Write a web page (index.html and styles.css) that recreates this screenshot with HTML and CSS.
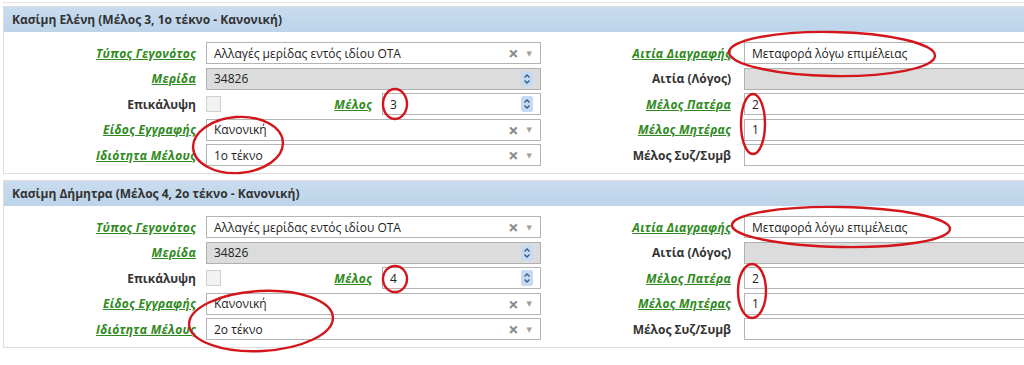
FILE: index.html
```html
<!DOCTYPE html>
<html>
<head>
<title>Μεταβολές μερίδας</title>
<link rel="stylesheet" href="styles.css">
</head>
<body>

<div class="prev-panel"></div>

<div class="panel">
    <div class="panel-title">Κασίμη Ελένη (Μέλος 3, 1ο τέκνο - Κανονική)</div>
    <div class="panel-body">
        <a class="label link">Τύπος Γεγονότος</a>
        <div class="field select"><span class="value">Αλλαγές μερίδας εντός ιδίου ΟΤΑ</span><span class="clear">×</span><span class="arrow">▼</span></div>
        <a class="label link right">Αιτία Διαγραφής</a>
        <div class="field"><span class="value">Μεταφορά λόγω επιμέλειας</span></div>

        <a class="label link">Μερίδα</a>
        <div class="field readonly"><span class="value">34826</span><span class="spin"></span></div>
        <span class="label right">Αιτία (Λόγος)</span>
        <div class="field readonly"></div>

        <span class="label">Επικάλυψη</span>
        <div class="split">
            <span class="check"></span>
            <a class="label link">Μέλος</a>
            <div class="field small"><span class="value">3</span><span class="spin"></span></div>
        </div>
        <a class="label link right">Μέλος Πατέρα</a>
        <div class="field"><span class="value">2</span></div>

        <a class="label link">Είδος Εγγραφής</a>
        <div class="field select"><span class="value">Κανονική</span><span class="clear">×</span><span class="arrow">▼</span></div>
        <a class="label link right">Μέλος Μητέρας</a>
        <div class="field"><span class="value">1</span></div>

        <a class="label link">Ιδιότητα Μέλους</a>
        <div class="field select"><span class="value">1ο τέκνο</span><span class="clear">×</span><span class="arrow">▼</span></div>
        <span class="label right">Μέλος Συζ/Συμβ</span>
        <div class="field"></div>
    </div>
</div>

<div class="panel">
    <div class="panel-title">Κασίμη Δήμητρα (Μέλος 4, 2ο τέκνο - Κανονική)</div>
    <div class="panel-body">
        <a class="label link">Τύπος Γεγονότος</a>
        <div class="field select"><span class="value">Αλλαγές μερίδας εντός ιδίου ΟΤΑ</span><span class="clear">×</span><span class="arrow">▼</span></div>
        <a class="label link right">Αιτία Διαγραφής</a>
        <div class="field"><span class="value">Μεταφορά λόγω επιμέλειας</span></div>

        <a class="label link">Μερίδα</a>
        <div class="field readonly"><span class="value">34826</span><span class="spin"></span></div>
        <span class="label right">Αιτία (Λόγος)</span>
        <div class="field readonly"></div>

        <span class="label">Επικάλυψη</span>
        <div class="split">
            <span class="check"></span>
            <a class="label link">Μέλος</a>
            <div class="field small"><span class="value">4</span><span class="spin"></span></div>
        </div>
        <a class="label link right">Μέλος Πατέρα</a>
        <div class="field"><span class="value">2</span></div>

        <a class="label link">Είδος Εγγραφής</a>
        <div class="field select"><span class="value">Κανονική</span><span class="clear">×</span><span class="arrow">▼</span></div>
        <a class="label link right">Μέλος Μητέρας</a>
        <div class="field"><span class="value">1</span></div>

        <a class="label link">Ιδιότητα Μέλους</a>
        <div class="field select"><span class="value">2ο τέκνο</span><span class="clear">×</span><span class="arrow">▼</span></div>
        <span class="label right">Μέλος Συζ/Συμβ</span>
        <div class="field"></div>
    </div>
</div>

<!-- hand-drawn marks on top of the screenshot -->
<svg class="marks" width="1024" height="365" viewBox="0 0 1024 365">
    <g fill="none" stroke="#d3161b" stroke-width="2.4">
        <ellipse cx="238" cy="145" rx="45" ry="28" transform="rotate(-4 238 145)"/>
        <ellipse cx="395" cy="104" rx="12" ry="15"/>
        <ellipse cx="832" cy="54" rx="103" ry="22" transform="rotate(1 832 54)"/>
        <ellipse cx="753" cy="124" rx="12" ry="30"/>

        <ellipse cx="261" cy="321" rx="72" ry="30" transform="rotate(-3 261 321)"/>
        <ellipse cx="395" cy="279" rx="12" ry="13"/>
        <ellipse cx="841" cy="227" rx="109" ry="20" transform="rotate(1 841 227)"/>
        <ellipse cx="752" cy="291" rx="14" ry="27"/>
    </g>
</svg>

</body>
</html>
```

FILE: styles.css
```css
html, body {
    overflow: hidden;
}

body {
    margin: 0;
    width: 1024px;
    height: 365px;
    position: relative;
    background: #fff;
    font-family: "Open Sans", "DejaVu Sans", sans-serif;
    font-size: 12px;
    color: #222;
}

.prev-panel {
    height: 2px;
    margin-left: 3px;
    border-bottom: 1px solid #e6e0e0;
}

.panel {
    margin: 3px 0 6px 3px;
    border: 1px solid #dedede;
    border-right: none;
    overflow: hidden;
}

.panel-title {
    height: 25px;
    line-height: 25px;
    padding-left: 8px;
    background: linear-gradient(#c9dcef, #bcd3e9);
    font-weight: bold;
    color: #333;
}

.panel-body {
    display: grid;
    grid-template-columns: 202px 335px 203px 360px;
    grid-auto-rows: 22px;
    row-gap: 3.5px;
    padding: 10px 0 7px;
}

.label {
    display: flex;
    align-items: center;
    justify-content: flex-end;
    padding-right: 10px;
    font-weight: bold;
    color: #333;
    white-space: nowrap;
}

.label.right {
    padding-right: 13px;
}

.label.link {
    color: #2f8a22;
    font-style: italic;
    text-decoration: underline;
    letter-spacing: 0.3px;
}

.field {
    position: relative;
    display: flex;
    align-items: center;
    box-sizing: border-box;
    height: 22px;
    border: 1px solid #b4b4b4;
    background: #fff;
    padding-left: 7px;
}

.field.readonly {
    background: #dcdcdc;
    border-color: #b0b0b0;
}

.field .value {
    flex: 1;
    white-space: nowrap;
}

.field .clear {
    color: #8a8a8a;
    font-size: 18px;
    line-height: 18px;
    font-weight: bold;
    margin-right: 8px;
}

.field .arrow {
    color: #a0a0a0;
    font-size: 7px;
    margin-right: 8px;
}

.spin {
    width: 12px;
    height: 16px;
    margin-right: 7px;
    border-radius: 2px;
    background: #c8daf2 url("data:image/svg+xml,%3Csvg xmlns='http://www.w3.org/2000/svg' width='12' height='16'%3E%3Cpath d='M3.5 6.5L6 4l2.5 2.5M3.5 9.5L6 12l2.5-2.5' fill='none' stroke='%23345a8c' stroke-width='1.4'/%3E%3C/svg%3E") no-repeat;
}

.split {
    display: flex;
    align-items: center;
}

.split .label {
    flex: 1;
    align-self: stretch;
}

.check {
    width: 13px;
    height: 14px;
    border: 1px solid #d0d0d0;
    background: #f2f2f2;
}

.field.small {
    width: 159px;
}

.marks {
    position: absolute;
    left: 0;
    top: 0;
    pointer-events: none;
}
```
